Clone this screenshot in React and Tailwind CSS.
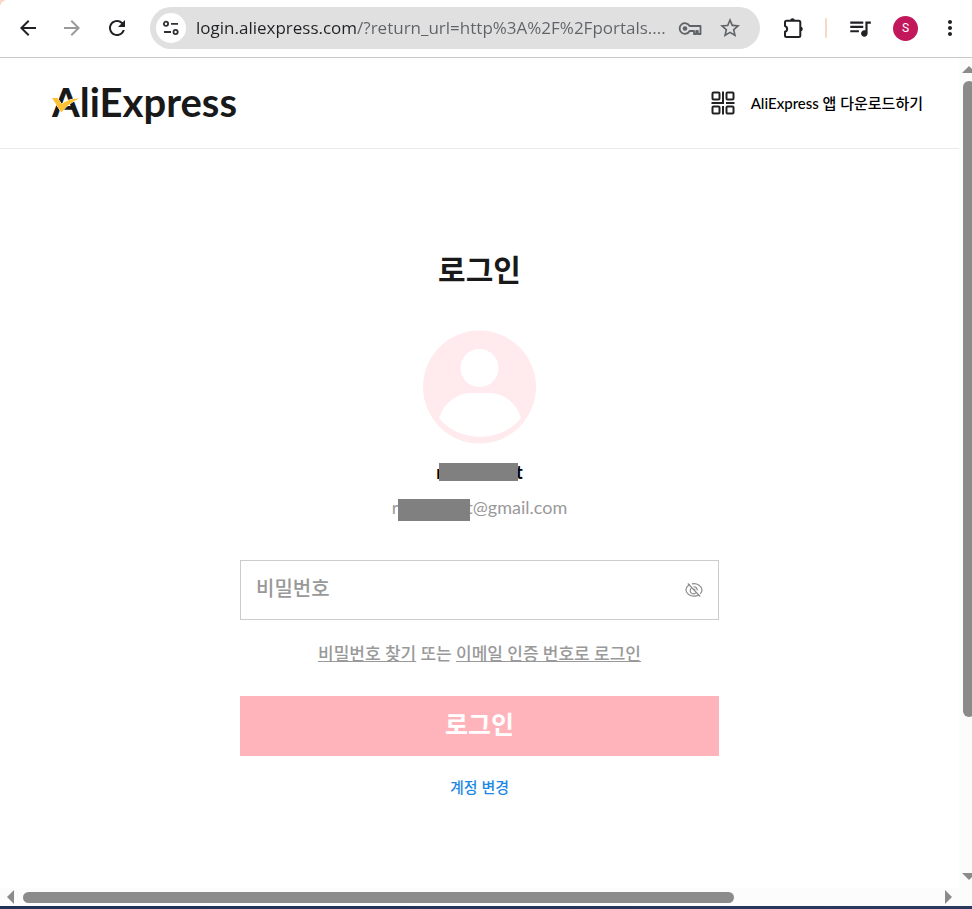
import React, { useState } from 'react';
import { MdArrowBack, MdArrowForward, MdRefresh, MdStarBorder, MdQueueMusic, MdMoreVert } from 'react-icons/md';

const PAGE_URL = 'login.aliexpress.com/?return_url=http%3A%2F%2Fportals....';

function SiteInfoIcon() {
  return (
    <svg className="h-4 w-4" viewBox="0 0 16 16" fill="none" stroke="#303134" strokeWidth="1.8">
      <circle cx="3" cy="3.8" r="2.1" />
      <path d="M8 3.8h7" />
      <circle cx="12.6" cy="12" r="2.1" />
      <path d="M1 12h7" />
    </svg>
  );
}

function KeyIcon() {
  return (
    <svg className="h-6 w-6" viewBox="0 0 24 24" fill="none" stroke="#5f6368" strokeWidth="1.8" strokeLinejoin="round">
      <path d="M11.6 10A5.3 5.3 0 1 0 11.6 15H16v3h2.2v-3h1.6v3H22.5V10z" />
      <circle cx="7" cy="12.5" r="2.3" fill="#5f6368" stroke="none" />
    </svg>
  );
}

function ExtensionIcon() {
  return (
    <svg className="h-6 w-6" viewBox="0 0 24 24" fill="none" stroke="#202124" strokeWidth="2" strokeLinejoin="round">
      <path d="M5.5 4.8h12.300a1.500 1.500 0 0 1 1.500 1.500v13.200a1.500 1.500 0 0 1-1.500 1.500H5.500A1.500 1.500 0 0 1 4 19.500v-3.800a2.900 2.900 0 0 0 0-5.600V6.300a1.500 1.500 0 0 1 1.500-1.500z" />
      <path d="M9.2 4.5a2.3 2.3 0 0 1 4.6 0zM19.5 10.7a2.3 2.3 0 0 1 0 4.6z" fill="#202124" stroke="none" />
    </svg>
  );
}

function QrIcon() {
  return (
    <svg className="h-6 w-6" viewBox="0 0 24 24" fill="none" stroke="#222" strokeWidth="2">
      <rect x="1.5" y="1.5" width="7" height="7" rx="1" />
      <rect x="15.5" y="1.5" width="7" height="7" rx="1" />
      <rect x="1.5" y="15.5" width="7" height="7" rx="1" />
      <rect x="15.5" y="15.5" width="7" height="7" rx="1" />
      <path d="M12 0.5V12H0.5M15 12h8.5M12 15v8.5" />
    </svg>
  );
}

function HiddenEyeIcon() {
  return (
    <svg className="h-[18px] w-[18px]" viewBox="0 0 18 18" fill="none" stroke="#8c8c8c" strokeWidth="1.2">
      <path d="M5 3.5C2.6 4.7 1 7 1 9c0 3 3.6 6.2 8 6.2 1.7 0 3.3-.5 4.6-1.2M7 2.8C12.5 1.8 17 5.5 17 9c0 1.400-.7 2.700-1.800 3.800" />
      <path d="M10.9 11.6A3.2 3.2 0 1 1 6.4 7.1M8.6 5.8a3.2 3.2 0 0 1 3.6 3.6" />
      <path d="M9 8l1.2 1.2M2.8 2.5l12.4 13" />
    </svg>
  );
}

function Avatar() {
  return (
    <svg className="h-[114px] w-[114px]" viewBox="0 0 114 114">
      <circle cx="56.5" cy="57" r="56.5" fill="#ffebed" />
      <circle cx="56.5" cy="38" r="19" fill="#fff" />
      <path d="M16 88C22 72 34 63 48 63h18c15 0 27 10 32 25C78 113 36 113 16 88z" fill="#fff" />
    </svg>
  );
}

function Arrow({ points, className }) {
  return (
    <svg className={className} viewBox="0 0 14 14" fill="#8b8b8b" aria-hidden="true">
      <polygon points={points} />
    </svg>
  );
}

function Toolbar() {
  const [url, setUrl] = useState(PAGE_URL);

  return (
    <div className="flex h-[58px] items-center border-b border-[#c8c8c8] bg-white pr-2.5 pb-px pl-4 text-[#202124]">
      <button aria-label="Back"><MdArrowBack className="h-6 w-6" /></button>
      <button aria-label="Forward" className="ml-5 text-[#9a9a9a]"><MdArrowForward className="h-6 w-6" /></button>
      <button aria-label="Reload" className="ml-[21px]"><MdRefresh className="h-6 w-6" /></button>

      <div className="ml-[21px] flex h-[42px] min-w-0 flex-1 items-center rounded-full bg-[#e0e0e0] pr-[18px] pl-1.5">
        <button aria-label="Site information" className="flex h-[30px] w-[30px] shrink-0 items-center justify-center rounded-full bg-white">
          <SiteInfoIcon />
        </button>
        <input
          aria-label="Address"
          value={url}
          onChange={(e) => setUrl(e.target.value)}
          className="ml-2.5 min-w-0 flex-1 bg-[linear-gradient(to_right,#202124_160px,#5f6368_160px)] bg-clip-text font-['Open_Sans',sans-serif] text-[17px] text-transparent caret-black outline-none"
        />
        <button aria-label="Passwords" className="ml-2"><KeyIcon /></button>
        <button aria-label="Bookmark" className="ml-4 text-[#5f6368]"><MdStarBorder className="h-6 w-6" /></button>
      </div>

      <button aria-label="Extensions" className="ml-[21px]"><ExtensionIcon /></button>
      <span className="ml-5 h-5 w-0.5 rounded-full bg-[#fbd5c6]" />
      <button aria-label="Media" className="ml-5"><MdQueueMusic className="h-[26px] w-[26px]" /></button>
      <button aria-label="Profile" className="ml-5 h-[25px] w-[25px] rounded-full bg-[#c2185b] font-['Roboto',sans-serif] text-xs text-white">
        S
      </button>
      <button aria-label="Menu" className="ml-5"><MdMoreVert className="h-6 w-6" /></button>
    </div>
  );
}

function Header() {
  return (
    <header className="flex h-[91px] items-center justify-between border-b border-[#ebebeb] pr-9 pl-[52px]">
      <a href="#home" className="relative pb-0.5 font-['Lato',sans-serif] text-[40px] leading-[48px] font-bold text-[#191919]">
        AliExpress
        <svg className="absolute top-3.5 left-0 h-6 w-7" viewBox="0 0 28 24" aria-hidden="true">
          <path d="M0 6h5.5L9.500 12C14 8.500 20 6.500 27.500 6.500 20 9.500 14 14 9.500 20.500z" fill="#ffc233" stroke="#fff" strokeWidth="1" paintOrder="stroke" />
        </svg>
      </a>
      <a href="#app" className="flex items-center gap-4 font-['Lato','Noto_Sans_CJK_KR',sans-serif] text-[15px] font-medium text-black">
        <QrIcon />
        AliExpress 앱 다운로드하기
      </a>
    </header>
  );
}

function LoginForm() {
  const [password, setPassword] = useState('');
  const [visible, setVisible] = useState(false);

  return (
    <form className="mx-auto flex w-full max-w-[479px] flex-col items-center" onSubmit={(e) => e.preventDefault()}>
      <h1 className="mt-[98px] text-[30px] leading-[44px] font-bold text-[#191919]">로그인</h1>
      <div className="mt-[39px]"><Avatar /></div>

      {/* masked account name and mail */}
      <p className="mt-4 flex h-6 items-center text-lg font-bold text-black">
        r<span className="relative -mr-0.5 -ml-1 h-[18px] w-[79px] bg-[#808080]" />t
      </p>
      <p className="mt-[13px] flex h-6 items-end text-lg text-[#999]">
        r<span className="relative -mr-1 h-[22px] w-[72px] bg-[#808080]" />t@gmail.com
      </p>

      <div className="mt-[39px] flex h-[60px] w-full items-center border border-[#ccc] px-[15px]">
        <input
          type={visible ? 'text' : 'password'}
          aria-label="비밀번호"
          placeholder="비밀번호"
          value={password}
          onChange={(e) => setPassword(e.target.value)}
          className="min-w-0 flex-1 pb-1 text-xl text-[#191919] outline-none placeholder:font-medium placeholder:text-[#999]"
        />
        <button type="button" aria-label="Show password" onClick={() => setVisible(!visible)}>
          <HiddenEyeIcon />
        </button>
      </div>

      <p className="mt-5 text-[17px] leading-7 font-medium whitespace-nowrap text-[#999]">
        <a href="#find" className="underline">비밀번호 찾기</a> 또는 <a href="#code" className="underline">이메일 인증 번호로 로그인</a>
      </p>

      <button className="mt-7 h-[60px] w-full bg-[#ffb3bb] pb-0.5 text-[25px] font-bold text-white">로그인</button>
      <a href="#switch" className="mt-5 text-[15px] leading-[22px] font-medium text-[#1e88e5]">계정 변경</a>
    </form>
  );
}

function App() {
  return (
    <div className="flex min-h-screen flex-col bg-[#fbd5c6] font-['Lato','Noto_Sans_CJK_KR',sans-serif]">
      <div className="flex flex-1 flex-col overflow-hidden rounded-tl-lg bg-white">
        <Toolbar />
        <div className="grid flex-1 grid-cols-[minmax(0,1fr)_13px] grid-rows-[1fr_18px]">
          <main>
            <Header />
            <LoginForm />
          </main>

          {/* scrollbars */}
          <div className="flex flex-col overflow-hidden bg-[#fcfcfc] pt-1.5 pb-1 pl-[3px]">
            <Arrow className="h-3.5 w-3.5 shrink-0" points="0,9 14,9 7,2" />
            <div className="mt-[3px] mb-1 ml-px flex-1">
              <div className="h-[81%] w-3 rounded-full bg-[#8b8b8b]" />
            </div>
            <Arrow className="h-3.5 w-3.5 shrink-0" points="0,3 14,3 7,10" />
          </div>
          <div className="col-span-2 flex items-center bg-[#fcfcfc] pr-[18px] pl-1">
            <Arrow className="h-3.5 w-3.5 shrink-0" points="10,0 10,14 3,7" />
            <div className="mx-[5px] flex-1">
              <div className="h-[11px] w-[78%] rounded-full bg-[#8b8b8b]" />
            </div>
            <Arrow className="h-3.5 w-3.5 shrink-0" points="5,0 5,14 12,7" />
          </div>
        </div>
      </div>
      <div className="h-[3px] bg-linear-to-r from-[#1f3156] via-[#26365a] to-[#2a3a5c]" />
    </div>
  );
}

export default App;
